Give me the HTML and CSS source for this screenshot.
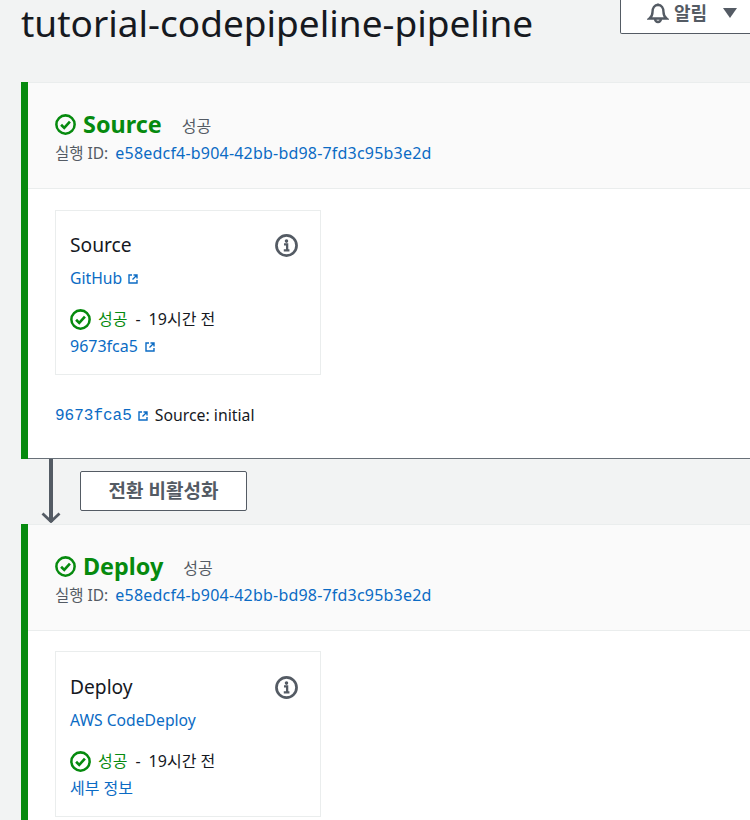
FILE: index.html
```html
<!DOCTYPE html>
<html lang="ko">
<head>
<meta charset="utf-8">
<title>tutorial-codepipeline-pipeline</title>
<link rel="stylesheet" href="styles.css">
</head>
<body>
<svg class="defs" width="0" height="0" aria-hidden="true">
  <symbol id="ok" viewBox="0 0 20 20"><circle cx="10" cy="10" r="8.700" fill="none" stroke="currentColor" stroke-width="2.400"/><path d="M5.800 10.200l3 3 5.400-6" fill="none" stroke="currentColor" stroke-width="2.500"/></symbol>
  <symbol id="ext" viewBox="0 0 10 10"><path d="M4 1H1v8h8V6M5.500 1H9v3.500M9 1L4.500 5.500" fill="none" stroke="currentColor" stroke-width="1.400"/></symbol>
  <symbol id="info" viewBox="0 0 22 22"><circle cx="11" cy="11" r="9.600" fill="none" stroke="currentColor" stroke-width="2.600"/><circle cx="11" cy="6.800" r="1.700" fill="currentColor"/><path d="M8.600 10h3v5M8.400 15.600h5.400" fill="none" stroke="currentColor" stroke-width="2.200"/></symbol>
</svg>
<header class="top">
  <h1 class="title">tutorial-codepipeline-pipeline</h1>
  <button class="notify" type="button">
    <svg class="bell" viewBox="0 0 22 22"><path d="M2.500 16.500c2-1.600 3-3 3-6.500C5.500 6 7.500 3 11 3s5.500 3 5.500 7c0 3.500 1 4.900 3 6.500zM8 17a3 3 0 0 0 6 0M11 1.500V3" fill="none" stroke="currentColor" stroke-width="2.400"/></svg>
    <span class="notify-label">알림</span>
    <span class="caret"></span>
  </button>
</header>
<main class="pipeline">
  <section class="stage">
    <div class="stage-head">
      <div class="stage-title"><svg class="ic-ok"><use href="#ok"/></svg><h2 class="stage-name">Source</h2><span class="stage-status">성공</span></div>
      <div class="exec"><span>실행 ID:</span> <a class="link run-id" href="#">e58edcf4-b904-42bb-bd98-7fd3c95b3e2d</a></div>
    </div>
    <div class="stage-body first">
      <div class="action">
        <div class="action-top"><span class="action-name">Source</span><svg class="ic-info"><use href="#info"/></svg></div>
        <div class="provider"><a class="link" href="#">GitHub</a><svg class="ic-ext"><use href="#ext"/></svg></div>
        <div class="result"><svg class="ic-ok small"><use href="#ok"/></svg><span class="green">성공</span><span class="dash">-</span><span>19시간 전</span></div>
        <div class="detail"><a class="link" href="#">9673fca5</a><svg class="ic-ext wide"><use href="#ext"/></svg></div>
      </div>
      <div class="commit"><a class="link mono" href="#">9673fca5</a><svg class="ic-ext"><use href="#ext"/></svg><span>Source: initial</span></div>
    </div>
  </section>
  <div class="transition">
    <div class="arrow"><span class="arrow-line"></span><svg class="arrow-head" viewBox="0 0 20 11"><path d="M1.500 1.500l8.500 8 8.500-8" fill="none" stroke="currentColor" stroke-width="2.800"/></svg></div>
    <button class="disable" type="button">전환 비활성화</button>
  </div>
  <section class="stage">
    <div class="stage-head">
      <div class="stage-title"><svg class="ic-ok"><use href="#ok"/></svg><h2 class="stage-name">Deploy</h2><span class="stage-status">성공</span></div>
      <div class="exec"><span>실행 ID:</span> <a class="link run-id" href="#">e58edcf4-b904-42bb-bd98-7fd3c95b3e2d</a></div>
    </div>
    <div class="stage-body">
      <div class="action tall">
        <div class="action-top"><span class="action-name">Deploy</span><svg class="ic-info"><use href="#info"/></svg></div>
        <div class="provider"><a class="link" href="#">AWS CodeDeploy</a></div>
        <div class="result"><svg class="ic-ok small"><use href="#ok"/></svg><span class="green">성공</span><span class="dash">-</span><span>19시간 전</span></div>
        <div class="detail"><a class="link" href="#">세부 정보</a></div>
      </div>
    </div>
  </section>
</main>
</body>
</html>
```
FILE: styles.css
```css
* { box-sizing: border-box; }
html, body { margin: 0; height: 820px; overflow: hidden; }
body {
  background: #f2f3f3;
  color: #16191f;
  font-family: "Noto Sans", "Noto Sans CJK KR", sans-serif;
  font-size: 16px;
  line-height: 20px;
}
.defs { display: block; height: 0; }
.link { color: #0b6bc4; text-decoration: none; }
.top {
  display: flex;
  justify-content: space-between;
  align-items: flex-start;
  height: 82px;
  padding-left: 21px;
  margin-right: -14px;
}
.title { margin: 0; font-size: 37px; line-height: 46px; font-weight: 400; white-space: nowrap; }
.notify {
  display: flex;
  align-items: center;
  width: 144px;
  height: 34px;
  padding: 0 0 7px 26px;
  background: #fff;
  border: 1px solid #545b64;
  border-top: 0;
  border-radius: 0 0 0 2px;
  color: #545b64;
  font: 700 18px/20px "Noto Sans", "Noto Sans CJK KR", sans-serif;
}
.bell { width: 22px; height: 22px; margin-right: 5px; }
.notify-label { margin-right: 16px; }
.caret { border: 7px solid transparent; border-top: 10px solid #545b64; border-bottom: 0; }
.pipeline { margin-left: 21px; margin-right: -10px; }
.stage { border-left: 7px solid #068a0e; }
.stage-head {
  height: 107px;
  padding: 27px 27px 0;
  background: #fafafa;
  border-top: 1px solid #eaeded;
  border-bottom: 1px solid #eaeded;
}
.stage-title { display: flex; align-items: center; height: 28px; color: #068a0e; }
.ic-ok { width: 21px; height: 21px; flex: none; }
.ic-ok.small { margin-right: 7px; color: #068a0e; }
.stage-name { margin: 0 20px 0 7px; font-size: 23.400px; line-height: 28px; font-weight: 700; }
.stage-status { margin-top: 4px; color: #545b64; }
.exec { margin-top: 5px; color: #545b64; line-height: 20px; font-size: 15.500px; }
.run-id { margin-left: 3px; font-size: 16px; letter-spacing: .2px; }
.stage-body { background: #fff; padding: 20px 27px 0; height: 270px; }
.stage-body.first { padding-top: 21px; border-bottom: 1px solid #687078; }
.action {
  width: 266px;
  height: 165px;
  padding: 20px 14px 0;
  background: #fff;
  border: 1px solid #eaeded;
}
.action.tall { height: 166px; padding-top: 21px; }
.action-top { display: flex; justify-content: space-between; align-items: center; height: 28px; }
.action-name { font-size: 19.200px; line-height: 28px; }
.ic-info { width: 23px; height: 23px; margin-right: 8px; color: #545b64; }
.provider { display: flex; align-items: center; margin-top: 9px; height: 20px; font-size: 15.700px; }
.ic-ext { width: 10px; height: 10px; margin: 2px 0 0 6px; color: #0b6bc4; flex: none; }
.ic-ext.wide { margin-left: 7px; }
.result { display: flex; align-items: center; margin-top: 20px; height: 22px; }
.green { color: #068a0e; }
.dash { margin: 0 8px; }
.detail { display: flex; align-items: center; height: 20px; margin-top: 6px; }
.commit { display: flex; align-items: center; height: 20px; margin-top: 30px; }
.commit .ic-ext { margin-right: 7px; }
.mono { font-family: "Liberation Mono", monospace; padding-top: 2px; }
.commit span { font-size: 15.800px; }
.transition { display: flex; height: 65px; }
.arrow { display: flex; flex-direction: column; align-items: center; width: 20px; margin-left: 20px; color: #545b64; }
.arrow-line { width: 4px; flex: 1; background: #545b64; margin-bottom: -10px; }
.arrow-head { width: 20px; height: 11px; flex: none; margin-bottom: 1px; }
.disable {
  width: 167px;
  height: 40px;
  margin: 12px 0 0 19px;
  padding: 0;
  background: #fff;
  border: 1px solid #545b64;
  border-radius: 2px;
  color: #545b64;
  font: 700 19px/20px "Noto Sans", "Noto Sans CJK KR", sans-serif;
}
```
